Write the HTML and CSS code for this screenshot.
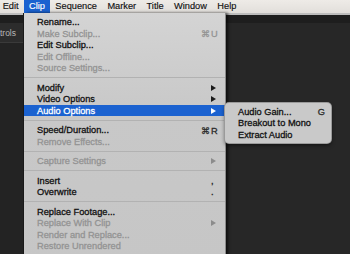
FILE: index.html
```html
<!DOCTYPE html>
<html lang="en">
<head>
    <meta charset="UTF-8">
    <meta name="viewport" content="width=device-width, initial-scale=1.0">
    <title>Clip menu</title>
    <link rel="stylesheet" href="styles.css">
</head>
<body>
    <div class="menubar">
        <span class="menubar-item">Edit</span>
        <span class="menubar-item active">Clip</span>
        <span class="menubar-item">Sequence</span>
        <span class="menubar-item">Marker</span>
        <span class="menubar-item">Title</span>
        <span class="menubar-item">Window</span>
        <span class="menubar-item">Help</span>
    </div>

    <div class="app">
        <div class="app-edge"></div>
        <div class="app-toolbar"></div>
        <div class="panels">
            <div class="panel panel-left">
                <div class="panel-head"><span>Effect Controls</span></div>
                <div class="panel-body"></div>
            </div>
            <div class="panel panel-right"></div>
        </div>
    </div>

    <div class="menu dropdown">
        <div class="item"><span class="label">Rename...</span></div>
        <div class="item disabled"><span class="label">Make Subclip...</span><span class="shortcut">⌘<span class="key">U</span></span></div>
        <div class="item"><span class="label">Edit Subclip...</span></div>
        <div class="item disabled"><span class="label">Edit Offline...</span></div>
        <div class="item disabled"><span class="label">Source Settings...</span></div>
        <div class="separator"></div>
        <div class="item"><span class="label">Modify</span><span class="arrow"></span></div>
        <div class="item"><span class="label">Video Options</span><span class="arrow"></span></div>
        <div class="item selected"><span class="label">Audio Options</span><span class="arrow"></span></div>
        <div class="separator"></div>
        <div class="item"><span class="label">Speed/Duration...</span><span class="shortcut">⌘<span class="key">R</span></span></div>
        <div class="item disabled"><span class="label">Remove Effects...</span></div>
        <div class="separator"></div>
        <div class="item disabled"><span class="label">Capture Settings</span><span class="arrow"></span></div>
        <div class="separator"></div>
        <div class="item"><span class="label">Insert</span><span class="shortcut"><span class="key">,</span></span></div>
        <div class="item"><span class="label">Overwrite</span><span class="shortcut"><span class="key">.</span></span></div>
        <div class="separator"></div>
        <div class="item"><span class="label">Replace Footage...</span></div>
        <div class="item disabled"><span class="label">Replace With Clip</span><span class="arrow"></span></div>
        <div class="item disabled"><span class="label">Render and Replace...</span></div>
        <div class="item disabled"><span class="label">Restore Unrendered</span></div>
    </div>

    <div class="menu submenu">
        <div class="item"><span class="label">Audio Gain...</span><span class="shortcut">G</span></div>
        <div class="item"><span class="label">Breakout to Mono</span></div>
        <div class="item"><span class="label">Extract Audio</span></div>
    </div>
</body>
</html>
```

FILE: styles.css
```css
* {
    margin: 0;
    padding: 0;
    box-sizing: border-box;
}

body {
    position: relative;
    width: 350px;
    height: 254px;
    overflow: hidden;
    background-color: #262626;
    font-family: 'Liberation Sans', Arial, sans-serif;
    font-size: 9.25px;
    color: #111111;
}

.menubar {
    display: flex;
    height: 13px;
    line-height: 13px;
    margin-left: -2.5px;
    background: linear-gradient(#eeebe7, #e2dfdb);
    color: #111111;
    -webkit-text-stroke: 0.15px currentColor;
}

.menubar-item {
    padding: 0 5.2px;
}

.menubar-item.active {
    background-color: #1b62d0;
    color: #ffffff;
}

.app {
    display: flex;
    flex-direction: column;
    height: 241px;
}

.app-edge {
    height: 2px;
    background-color: #bdbdbd;
}

.app-toolbar {
    height: 8px;
    background-color: #1e1e1e;
}

.panels {
    flex: 1;
    display: flex;
}

.panel-left {
    width: 24px;
    display: flex;
    flex-direction: column;
}

.panel-head {
    height: 20px;
    display: flex;
    justify-content: flex-end;
    align-items: center;
    padding-right: 8px;
    overflow: hidden;
    white-space: nowrap;
    background-color: #2c2c2c;
    border-bottom: 1px solid #3a3a3a;
    color: #b8b8b8;
    font-size: 8.5px;
}

.panel-body {
    flex: 1;
    background-color: #232323;
}

.panel-right {
    flex: 1;
    background-color: #272727;
}

.menu {
    position: absolute;
    background: linear-gradient(#d4d4d4, #c8c8c8 40%, #c6c6c6);
    -webkit-text-stroke: 0.3px currentColor;
}

.dropdown {
    top: 13px;
    left: 24px;
    width: 201px;
    height: 250px;
    padding-top: 3.25px;
    box-shadow: 1px 0 0 #8a8a8a, 3px 0 3px rgba(0, 0, 0, 0.7), -1px 0 0 #1a1a1a;
}

.submenu {
    top: 103px;
    left: 225px;
    width: 106px;
    height: 40px;
    padding-top: 3px;
    border-radius: 4px;
    background: #c9c9c9;
    box-shadow: 0 0 0 1px #9a9a9a, 0 2px 4px rgba(0, 0, 0, 0.6);
}

.item {
    display: flex;
    align-items: center;
    height: 11.5px;
    padding: 0 8px 0 13px;
    white-space: nowrap;
}

.submenu .item {
    padding-right: 6px;
}

.label {
    flex: 1;
}

.item.disabled {
    color: #939393;
}

.item.selected {
    background-color: #1b62d0;
    color: #ffffff;
}

.shortcut {
    color: #2a2a2a;
}

.item.disabled .shortcut {
    color: #939393;
}

.key {
    display: inline-block;
    width: 6px;
    margin-left: 1px;
    text-align: left;
}

.arrow {
    width: 0;
    height: 0;
    margin-right: 1px;
    border-top: 3.5px solid transparent;
    border-bottom: 3.5px solid transparent;
    border-left: 5px solid #1a1a1a;
}

.item.selected .arrow {
    border-left-color: #ffffff;
}

.item.disabled .arrow {
    border-left-color: #8c8c8c;
}

.separator {
    height: 8px;
    padding-top: 3.5px;
}

.separator::before {
    content: "";
    display: block;
    height: 1px;
    background-color: #b2b2b2;
}
```
